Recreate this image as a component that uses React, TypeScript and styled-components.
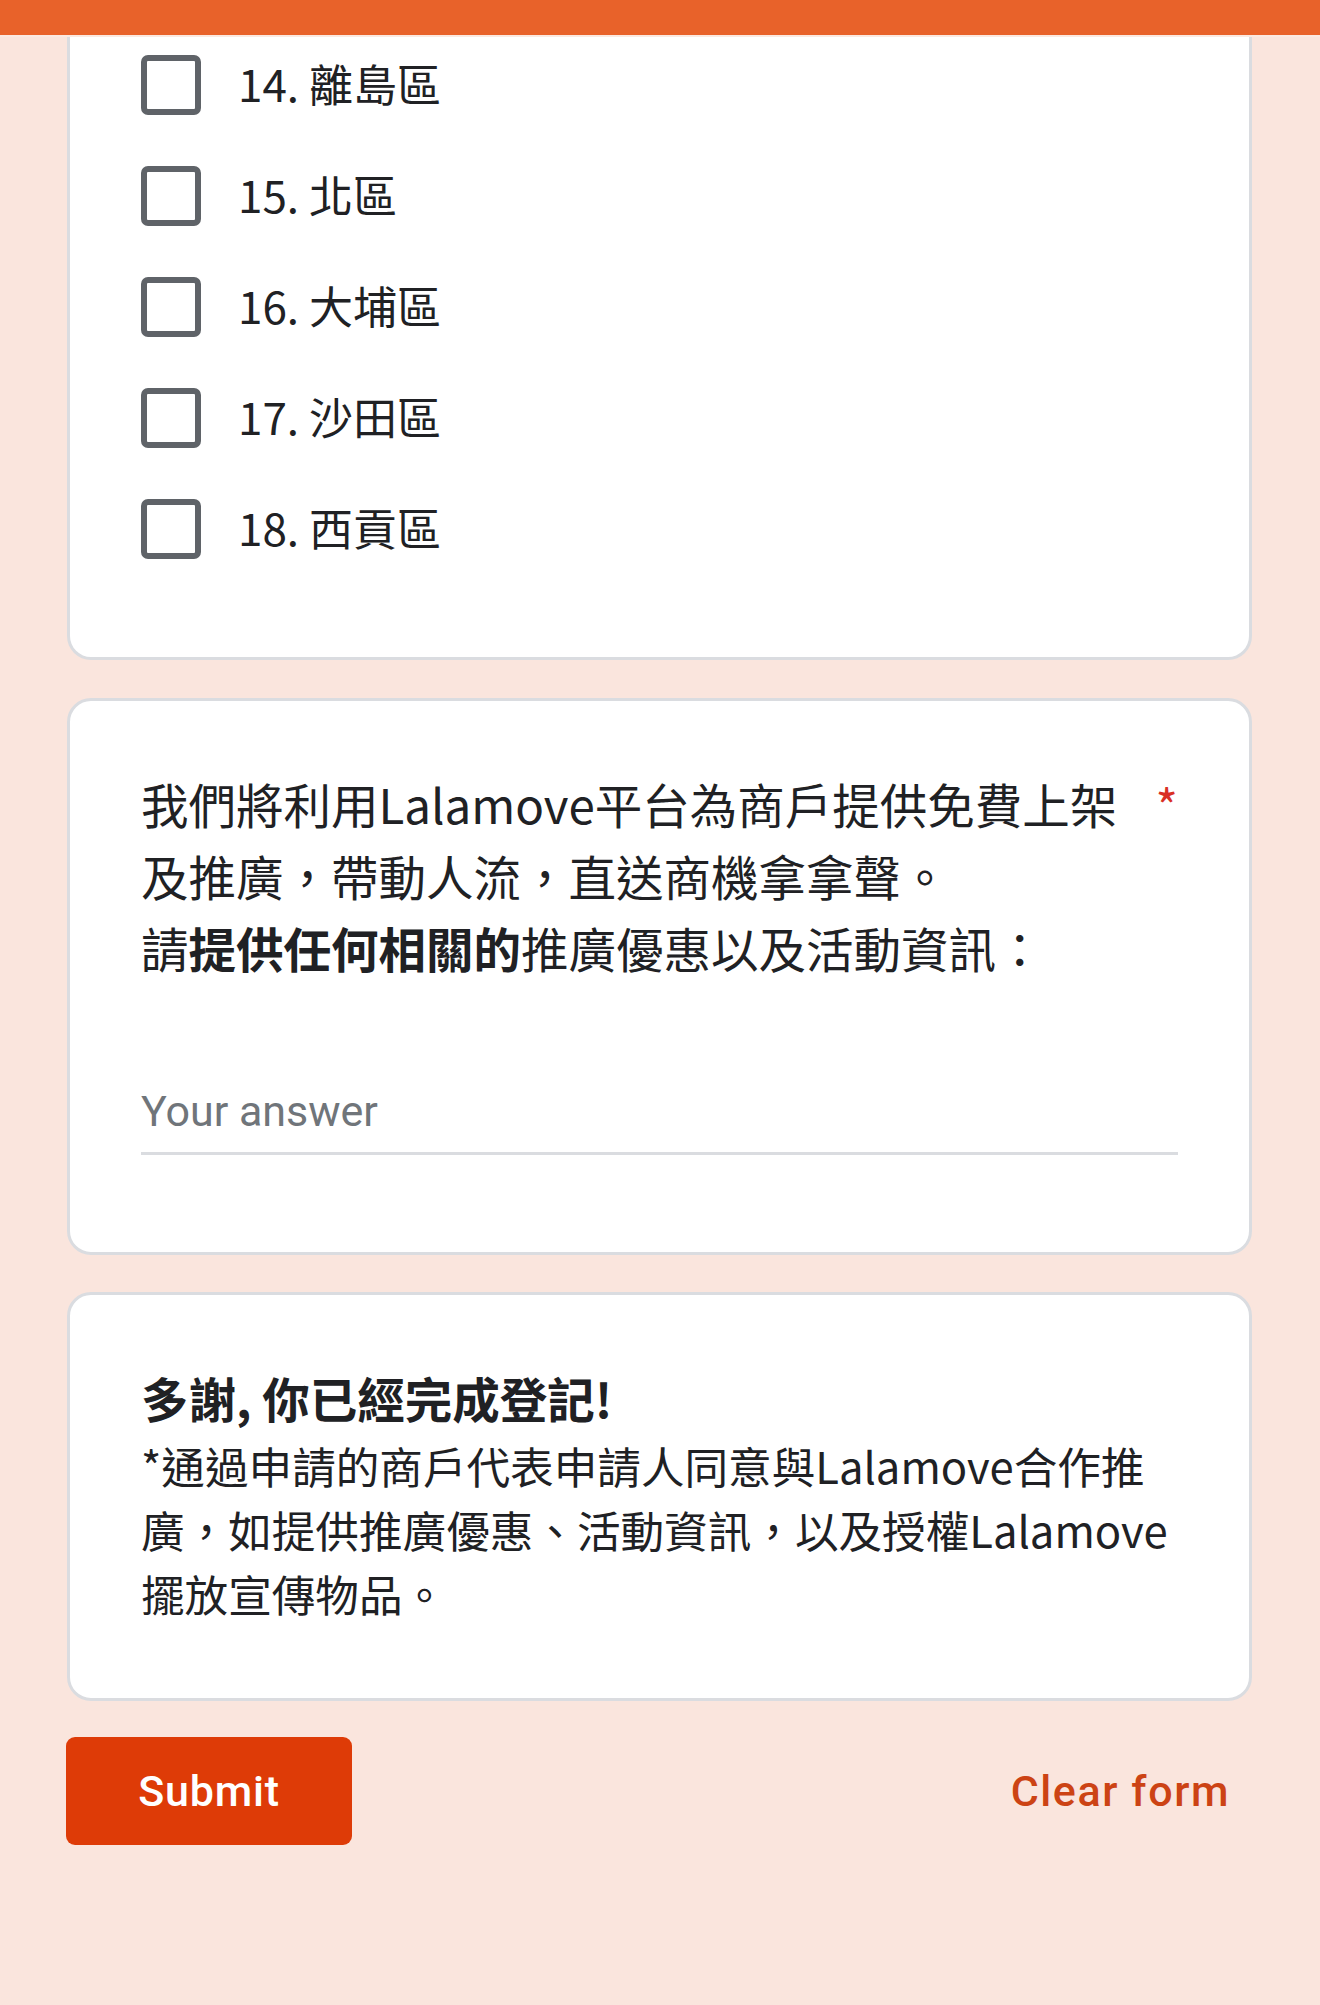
import styled, { createGlobalStyle } from 'styled-components'

const GlobalStyle = createGlobalStyle`
  html, body {
    margin: 0;
    padding: 0;
    background: #fae5dd;
  }
  * {
    box-sizing: border-box;
  }
`

const districts = ['14. 離島區', '15. 北區', '16. 大埔區', '17. 沙田區', '18. 西貢區']

export default function App() {
  return (
    <>
      <GlobalStyle />
      <Page>
        <TopBar />

        <Card $clipped $top={18} $bottom={98} $gap={38}>
          <OptionList>
            {districts.map((label) => (
              <OptionRow key={label}>
                <Checkbox type="checkbox" />
                <OptionLabel>{label}</OptionLabel>
              </OptionRow>
            ))}
          </OptionList>
        </Card>

        <Card $top={67} $bottom={97} $gap={37}>
          <QuestionHeader>
            <QuestionText>
              我們將利用Lalamove平台為商戶提供免費上架
              <br />
              及推廣，帶動人流，直送商機拿拿聲。
              <br />
              請<strong>提供任何相關的</strong>推廣優惠以及活動資訊：
            </QuestionText>
            <Required>*</Required>
          </QuestionHeader>
          <AnswerInput placeholder="Your answer" />
        </Card>

        <Card $top={68} $bottom={73} $gap={36}>
          <NoteTitle>多謝, 你已經完成登記!</NoteTitle>
          <NoteText>
            *通過申請的商戶代表申請人同意與Lalamove合作推
            <br />
            廣，如提供推廣優惠、活動資訊，以及授權Lalamove
            <br />
            擺放宣傳物品。
          </NoteText>
        </Card>

        <Actions>
          <SubmitButton>Submit</SubmitButton>
          <ClearButton>Clear form</ClearButton>
        </Actions>
      </Page>
    </>
  )
}

const Page = styled.div`
  min-height: 2005px;
  background: #fae5dd;
  font-family: 'Noto Sans CJK TC', 'Noto Sans', sans-serif;
  color: #202124;
`

const TopBar = styled.div`
  height: 37px;
  background: #e8622a;
  border-bottom: 2px solid #fbe9e1;
`

const Card = styled.section<{ $clipped?: boolean; $top: number; $bottom: number; $gap: number }>`
  margin: 0 68px ${(p) => p.$gap}px 67px;
  padding: ${(p) => p.$top}px 71px ${(p) => p.$bottom}px;
  background: #ffffff;
  border: 3px solid #dadce0;
  border-radius: 24px;

  ${(p) =>
    p.$clipped &&
    `
    border-top: none;
    border-top-left-radius: 0;
    border-top-right-radius: 0;
  `}
`

const OptionList = styled.div`
  display: flex;
  flex-direction: column;
  gap: 51px;
`

const OptionRow = styled.label`
  display: flex;
  align-items: center;
  height: 60px;
  gap: 37px;
`

const Checkbox = styled.input`
  appearance: none;
  margin: 0;
  width: 60px;
  height: 60px;
  border: 6px solid #5f6368;
  border-radius: 7px;
  background: #fff;
  flex-shrink: 0;
`

const OptionLabel = styled.span`
  font-size: 44px;
  line-height: 60px;
  margin-top: -5px;
  color: #202124;
`

const QuestionHeader = styled.div`
  display: flex;
  justify-content: space-between;
  align-items: flex-start;
`

const QuestionText = styled.div`
  flex: 1;
  min-width: 0;
  font-size: 47.5px;
  line-height: 72px;
  color: #202124;

  strong {
    font-weight: 700;
  }
`

const Required = styled.span`
  font-size: 48px;
  line-height: 72px;
  color: #d93025;
  margin-left: 24px;
`

const AnswerInput = styled.input`
  display: block;
  width: 100%;
  height: 74px;
  margin-top: 97px;
  padding: 0 0 11px;
  border: none;
  border-bottom: 3px solid #dadce0;
  outline: none;
  background: transparent;
  font-family: Roboto, 'Noto Sans', sans-serif;
  font-size: 43px;
  color: #202124;

  &::placeholder {
    color: #70757a;
  }
`

const NoteTitle = styled.div`
  font-size: 47.5px;
  line-height: 70px;
  font-weight: 700;
  color: #202124;
`

const NoteText = styled.div`
  font-size: 43.6px;
  line-height: 64px;
  color: #202124;
`

const Actions = styled.div`
  display: flex;
  justify-content: space-between;
  align-items: center;
  margin: 0 68px 0 66px;
`

const SubmitButton = styled.button`
  width: 286px;
  height: 108px;
  border: none;
  border-radius: 9px;
  background: #de3b07;
  color: #ffffff;
  font-family: Roboto, 'Noto Sans', sans-serif;
  font-size: 43px;
  font-weight: 500;
  letter-spacing: 0.8px;
`

const ClearButton = styled.button`
  height: 108px;
  padding: 0 22px;
  border: none;
  background: transparent;
  color: #cc4314;
  font-family: Roboto, 'Noto Sans', sans-serif;
  font-size: 43px;
  font-weight: 500;
  letter-spacing: 1.6px;
`
